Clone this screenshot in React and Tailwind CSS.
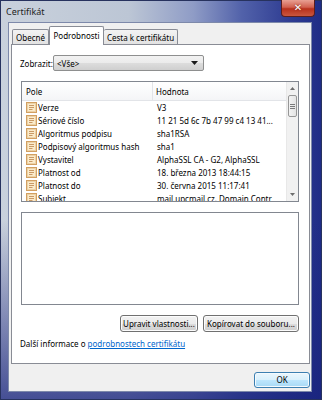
import React from "react";

const FieldIcon = () => (
  <svg width="11" height="11" viewBox="0 0 11 11" className="shrink-0">
    <rect x="0.5" y="0.5" width="10" height="10" fill="#fbebcb" stroke="#d2a062" />
    <rect x="1.5" y="1.5" width="8" height="8" fill="none" stroke="#ecd2a6" />
    <line x1="3" y1="3.5" x2="8" y2="3.5" stroke="#c99a66" />
    <line x1="3" y1="5.5" x2="8" y2="5.5" stroke="#c99a66" />
    <line x1="3" y1="7.5" x2="6.5" y2="7.5" stroke="#c99a66" />
  </svg>
);

const rows = [
  ["Verze", "V3"],
  ["Sériové číslo", "11 21 5d 6c 7b 47 99 c4 13 41..."],
  ["Algoritmus podpisu", "sha1RSA"],
  ["Podpisový algoritmus hash", "sha1"],
  ["Vystavitel", "AlphaSSL CA - G2, AlphaSSL"],
  ["Platnost od", "18. března 2013 18:44:15"],
  ["Platnost do", "30. června 2015 11:17:41"],
  ["Subjekt", "mail.upcmail.cz, Domain Contr"],
];

const Btn = ({ children, w }) => (
  <div
    className={`${w} h-[17px] rounded-[3px] border border-[#707070] bg-[linear-gradient(180deg,#f2f2f2_0%,#ebebeb_50%,#dddddd_51%,#cfcfcf_100%)] shadow-[inset_0_0_0_1px_#fcfcfc] flex items-center justify-center whitespace-nowrap leading-[15px]`}
  >
    {children}
  </div>
);

export default function App() {
  return (
    <div className="w-[322px] h-[400px] flex flex-col overflow-hidden font-['Noto_Sans',sans-serif] text-[8px] leading-[11px] text-black bg-[linear-gradient(180deg,rgba(0,0,0,0)_55%,rgba(25,35,125,0.75)_100%),linear-gradient(90deg,#c9d1dc_0%,#bcc6d5_40%,#8f9cc6_60%,#5262aa_75%,#2e3c92_90%,#1f2c86_100%)] shadow-[inset_0_0_0_1px_#27325e]">
      {/* title bar */}
      <div className="h-[22px] shrink-0 flex items-start relative">
        <span className="pl-[6px] pt-[6px] text-[9px] leading-[12px] text-[#1e1e1e]">Certifikát</span>
        <div className="ml-auto mr-[7px] w-[34px] h-[17px] rounded-b-[4px] border border-t-0 border-[#5a1e1e] bg-[linear-gradient(180deg,#e8a093_0%,#d1604f_45%,#b8301c_55%,#c9573f_100%)] flex items-center justify-center">
          <span className="text-white text-[10px] leading-[12px] font-bold font-['DejaVu_Sans',sans-serif] [text-shadow:0_0_2px_#6a1a10]">✕</span>
        </div>
      </div>

      {/* client area */}
      <div className="ml-[8px] mr-[10px] h-[370px] shrink-0 bg-[#f0f0f0] border border-[#7d89aa] flex flex-col">
        {/* tab row */}
        <div className="h-[21px] ml-[2px] mr-[1px] pl-[1px] flex items-end">
          <div className="w-[37px] h-[15px] border border-b-0 border-[#898c95] rounded-t-[2px] bg-[linear-gradient(180deg,#f3f3f3,#e2e2e2)] flex items-center justify-center">
            Obecné
          </div>
          <div className="w-[55px] h-[19px] -mb-[1px] relative z-10 border border-b-0 border-[#898c95] rounded-t-[2px] bg-white flex items-center justify-center pb-[1px]">
            Podrobnosti
          </div>
          <div className="w-[74px] h-[15px] border border-b-0 border-l-0 border-[#898c95] rounded-t-[2px] bg-[linear-gradient(180deg,#f3f3f3,#e2e2e2)] flex items-center justify-center">
            Cesta k certifikátu
          </div>
        </div>

        {/* tab panel */}
        <div className="ml-[2px] mr-[1px] h-[320px] border border-[#898c95] bg-white flex flex-col">
          {/* Zobrazit */}
          <div className="mt-[10px] pl-[8px] flex items-center">
            <span className="w-[33px]">Zobrazit:</span>
            <div className="w-[151px] h-[16px] rounded-[2px] border border-[#8e8f8f] bg-[linear-gradient(180deg,#f2f2f2_0%,#ebebeb_50%,#dddddd_51%,#cfcfcf_100%)] flex items-center pl-[3px] pr-[5px]">
              <span>&lt;Vše&gt;</span>
              <svg width="7" height="4" viewBox="0 0 7 4" className="ml-auto">
                <path d="M0 0H7L3.5 4Z" fill="#1a1a1a" />
              </svg>
            </div>
          </div>

          {/* list */}
          <div className="mt-[10px] ml-[9px] w-[278px] h-[121px] border border-[#828790] bg-white flex">
            <div className="flex-1 min-w-0 flex flex-col overflow-hidden">
              <div className="h-[19px] shrink-0 flex bg-[linear-gradient(180deg,#ffffff,#f4f5f7)] border-b border-[#e2e4e8]">
                <div className="w-[131px] pl-[4px] flex items-center border-r border-[#e2e4e8]">Pole</div>
                <div className="flex-1 pl-[3px] flex items-center">Hodnota</div>
              </div>
              {rows.map(([k, v]) => (
                <div key={k} className="h-[13px] shrink-0 flex items-center leading-[13px]">
                  <div className="w-[132px] pl-[4px] flex items-center gap-[1px] whitespace-nowrap">
                    <FieldIcon />
                    <span>{k}</span>
                  </div>
                  <div className="flex-1 min-w-0 pl-[3px] whitespace-nowrap overflow-x-hidden">{v}</div>
                </div>
              ))}
            </div>
            {/* scrollbar */}
            <div className="w-[12px] shrink-0 bg-[#f1f1f1] border-l border-[#e8e8e8] flex flex-col">
              <div className="h-[13px] flex items-center justify-center">
                <svg width="5" height="3" viewBox="0 0 5 3">
                  <path d="M0 3H5L2.5 0Z" fill="#6d6d6d" />
                </svg>
              </div>
              <div className="mx-[1px] h-[22px] rounded-[2px] border border-[#979797] bg-[linear-gradient(90deg,#f3f3f3,#e4e4e4)] flex flex-col items-center justify-center gap-[1px]">
                <div className="w-[5px] h-[1px] bg-[#7a7a7a]" />
                <div className="w-[5px] h-[1px] bg-[#7a7a7a]" />
                <div className="w-[5px] h-[1px] bg-[#7a7a7a]" />
              </div>
              <div className="mt-auto h-[13px] flex items-center justify-center">
                <svg width="5" height="3" viewBox="0 0 5 3">
                  <path d="M0 0H5L2.5 3Z" fill="#6d6d6d" />
                </svg>
              </div>
            </div>
          </div>

          {/* detail box */}
          <div className="mt-[10px] ml-[9px] w-[278px] h-[93px] border border-[#828790] bg-white" />

          {/* buttons */}
          <div className="mt-[10px] ml-[9px] w-[278px] flex justify-end gap-[5px]">
            <Btn w="w-[78px]">Upravit vlastnosti...</Btn>
            <Btn w="w-[96px]">Kopírovat do souboru...</Btn>
          </div>

          {/* link */}
          <div className="mt-[6px] pl-[8px] whitespace-nowrap leading-[11px]">
            Další informace o <span className="text-[#0066cc] underline">podrobnostech certifikátu</span>
          </div>
        </div>

        {/* OK row */}
        <div className="mt-[8px] mr-[1px] flex justify-end">
          <div className="w-[56px] h-[16px] rounded-[3px] border border-[#3c7fb1] bg-[linear-gradient(180deg,#eaf6fd_0%,#d9f0fc_50%,#bee6fd_51%,#a7d9f5_100%)] shadow-[inset_0_0_0_1px_#f4fafe] flex items-center justify-center leading-[14px]">
            OK
          </div>
        </div>
      </div>
    </div>
  );
}
